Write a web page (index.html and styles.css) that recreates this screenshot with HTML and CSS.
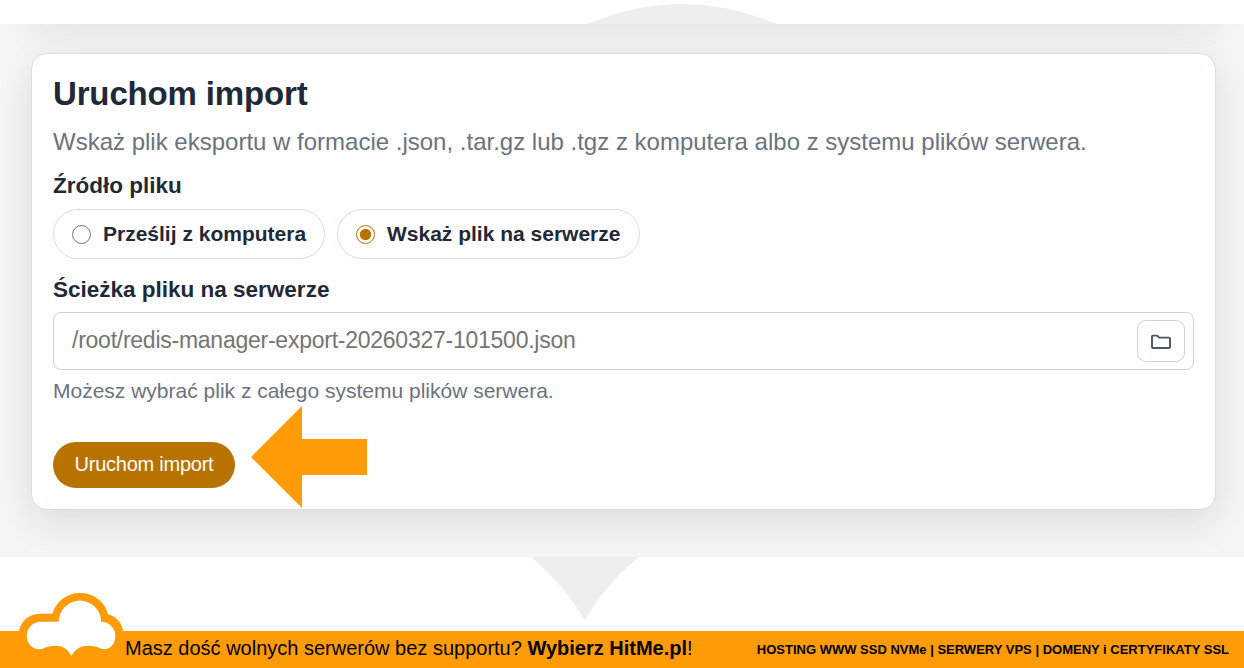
FILE: index.html
```html
<!DOCTYPE html>
<html lang="pl">
<head>
    <meta charset="UTF-8">
    <meta name="viewport" content="width=device-width, initial-scale=1.0">
    <title>Uruchom import</title>
    <link rel="stylesheet" href="styles.css">
</head>
<body>
    <svg class="watermark" width="1244" height="668" viewBox="0 0 1244 668">
        <path d="M570 32 Q682 -24 794 32 Z M522 550 Q562 580 585 621 Q607 580 648 550 Z" fill="#eee"/>
    </svg>
    <main class="panel">
        <div class="previous-card"></div>
        <form class="card">
            <h1>Uruchom import</h1>
            <p class="lead">Wskaż plik eksportu w formacie .json, .tar.gz lub .tgz z komputera albo z systemu plików serwera.</p>
            <div class="field-label">Źródło pliku</div>
            <div class="sources">
                <label class="source source-upload">
                    <input type="radio" name="source" value="upload">
                    <span>Prześlij z komputera</span>
                </label>
                <label class="source source-server">
                    <input type="radio" name="source" value="server" checked>
                    <span>Wskaż plik na serwerze</span>
                </label>
            </div>
            <label class="field-label" for="path">Ścieżka pliku na serwerze</label>
            <div class="path-box">
                <input type="text" id="path" name="path" placeholder="/root/redis-manager-export-20260327-101500.json">
                <button type="button" class="browse" aria-label="Wybierz plik">
                    <svg width="22" height="16" viewBox="0 0 22 16">
                        <path d="M2 2.600 Q2 1.600 3 1.600 H7.200 L9.200 3.600 H19 Q20 3.600 20 4.600 V13 Q20 14 19 14 H3 Q2 14 2 13 Z" fill="none" stroke="#4b5563" stroke-width="1.9" stroke-linejoin="round"/>
                    </svg>
                </button>
            </div>
            <small class="hint">Możesz wybrać plik z całego systemu plików serwera.</small>
            <div class="actions">
                <button type="button" class="submit">Uruchom import</button>
                <svg class="arrow" width="116" height="102" viewBox="0 0 116 102">
                    <path d="M0 51 L51 0 V33 H116 V69 H51 V102 Z" fill="#ff9b07"/>
                </svg>
            </div>
        </form>
    </main>
    <footer class="banner">
        <svg class="cloud" width="108" height="76" viewBox="0 0 108 76">
            <path d="M3 39 A21 21 0 0 1 23 21.800 H36.300 A28.500 28.500 0 0 1 64 1 A28.500 28.500 0 0 1 92 22.300 A20 20 0 0 1 107 39 L103 68 H12 Z" fill="#ff9b07"/>
            <path d="M24 29.800 H42.700 A21.200 21.200 0 0 1 85.100 29.800 A14 14 0 0 1 99.300 44 C99.300 53 93 58.500 86 57 C74 52 62 52 55.400 64 C49 52 38 52 26 57 C17 58.500 10.700 52 10.700 44 A14 14 0 0 1 24 29.800 Z" fill="#fff"/>
        </svg>
        <p class="slogan">Masz dość wolnych serwerów bez supportu? <b>Wybierz HitMe.pl</b>!</p>
        <p class="offer">HOSTING WWW SSD NVMe | SERWERY VPS | DOMENY i CERTYFIKATY SSL</p>
    </footer>
</body>
</html>
```

FILE: styles.css
```css
body {
    margin: 0;
    height: 668px;
    padding-top: 24px;
    box-sizing: border-box;
    display: flex;
    flex-direction: column;
    background: #fff;
    color: #1f2937;
    font-family: "Liberation Sans", Arial, sans-serif;
    overflow: hidden;
}
h1, p {
    margin: 0;
    white-space: nowrap;
}
/* grey shape behind the panel */
.watermark {
    position: absolute;
    top: 0;
    left: 0;
    z-index: -1;
}
.panel {
    height: 533px;
    padding: 0 28px 0 31px;
    box-sizing: border-box;
    background: #f4f5f7;
    overflow: hidden;
}
/* only the shadow of the card above is visible */
.previous-card {
    height: 100px;
    margin-top: -100px;
    margin-bottom: 29px;
    border-radius: 16px;
    box-shadow: 0 10px 36px rgba(25, 30, 35, 0.08);
}
.card {
    position: relative;
    height: 457px;
    padding: 0 21px;
    box-sizing: border-box;
    background: #fff;
    border: 1px solid #d9dee3;
    border-radius: 16px;
    box-shadow: 0 12px 36px rgba(25, 30, 38, 0.11);
}
h1 {
    padding-top: 20px;
    font-size: 33px;
    line-height: 40px;
    letter-spacing: -0.15px;
}
.lead {
    margin-top: 12px;
    font-size: 24px;
    line-height: 32px;
    color: #6b7280;
}
.field-label {
    display: block;
    font-size: 22.5px;
    line-height: 28px;
    font-weight: bold;
}
.lead + .field-label {
    margin-top: 14px;
}
.sources {
    display: flex;
    gap: 12px;
    margin: 9px 0 17px;
}
.source {
    display: flex;
    align-items: center;
    height: 50px;
    padding-left: 18px;
    box-sizing: border-box;
    border: 1px solid #d9dee3;
    border-radius: 25px;
    font-size: 21px;
    font-weight: bold;
    white-space: nowrap;
}
.source-upload {
    width: 272px;
}
.source-server {
    width: 303px;
}
.source input {
    width: 19px;
    height: 19px;
    margin: 0 12px 0 0;
    accent-color: #b87200;
}
.path-box {
    display: flex;
    align-items: center;
    height: 58px;
    margin-top: 8px;
    padding: 0 8px 0 18px;
    box-sizing: border-box;
    border: 1px solid #ced4de;
    border-radius: 8px;
}
.path-box input {
    flex: 1;
    padding: 0 0 2px;
    border: none;
    outline: none;
    background: none;
    font: 23px "Liberation Sans", Arial, sans-serif;
    letter-spacing: -0.25px;
}
.path-box input::placeholder {
    color: #757575;
}
.browse {
    display: flex;
    align-items: center;
    justify-content: center;
    width: 48px;
    height: 42px;
    padding: 1px 0 0;
    background: #fff;
    border: 1px solid #ced4de;
    border-radius: 9px;
}
.hint {
    display: block;
    margin-top: 8px;
    font-size: 21px;
    line-height: 26px;
    color: #6b7280;
}
.actions {
    display: flex;
    align-items: flex-start;
    gap: 16px;
    margin-top: 2px;
}
.submit {
    width: 182px;
    height: 46px;
    margin-top: 36px;
    padding: 0 0 2px;
    border: none;
    border-radius: 23px;
    background: #b87200;
    color: #fff;
    font: 20px "Liberation Sans", Arial, sans-serif;
    letter-spacing: -0.25px;
}
.banner {
    display: flex;
    align-items: center;
    height: 37px;
    margin-top: 74px;
    padding: 0 15px 0 16px;
    background: #ff9b07;
    color: #000;
}
.cloud {
    align-self: flex-end;
    margin-right: 1px;
    flex-shrink: 0;
}
.slogan {
    padding-bottom: 2px;
    font-size: 20px;
}
.offer {
    margin-left: auto;
    font-size: 13px;
    font-weight: bold;
}
```
